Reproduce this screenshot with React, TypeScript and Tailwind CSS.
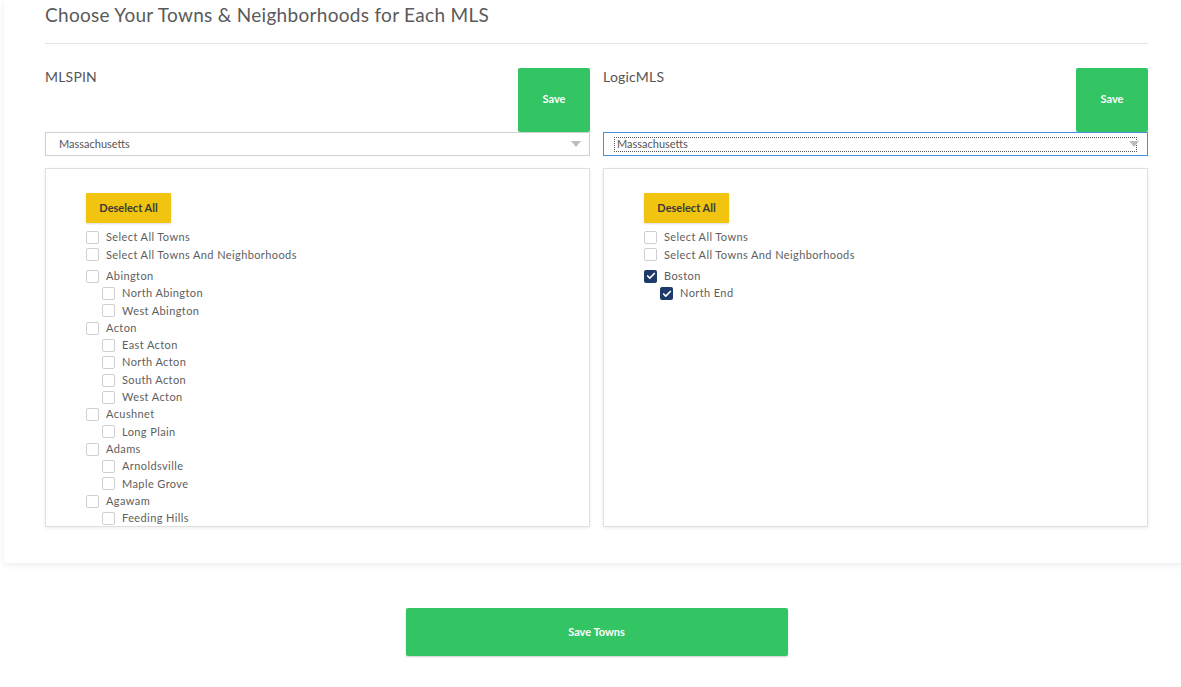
import { Check } from 'lucide-react'

type Town = { name: string; checked?: boolean; hoods: { name: string; checked?: boolean }[] }

const mlspinTowns: Town[] = [
  { name: 'Abington', hoods: [{ name: 'North Abington' }, { name: 'West Abington' }] },
  { name: 'Acton', hoods: [{ name: 'East Acton' }, { name: 'North Acton' }, { name: 'South Acton' }, { name: 'West Acton' }] },
  { name: 'Acushnet', hoods: [{ name: 'Long Plain' }] },
  { name: 'Adams', hoods: [{ name: 'Arnoldsville' }, { name: 'Maple Grove' }] },
  { name: 'Agawam', hoods: [{ name: 'Feeding Hills' }] },
]

const logicTowns: Town[] = [{ name: 'Boston', checked: true, hoods: [{ name: 'North End', checked: true }] }]

function Box({ checked }: { checked?: boolean }) {
  if (checked) {
    return (
      <span className="flex h-[13px] w-[13px] shrink-0 items-center justify-center rounded-[2px] bg-[#1d3a6b]">
        <Check size={10} strokeWidth={4} className="text-white" />
      </span>
    )
  }
  return <span className="h-[13px] w-[13px] shrink-0 rounded-[2px] border border-[#cfcfcf] bg-white" />
}

function Row({ label, checked, indent }: { label: string; checked?: boolean; indent?: boolean }) {
  return (
    <label className={`flex h-[17.3px] items-center gap-[7px] text-[11px] tracking-[0.4px] text-[#5e5e5e] ${indent ? 'pl-4' : ''}`}>
      <Box checked={checked} />
      <span>{label}</span>
    </label>
  )
}

function MlsColumn({ name, towns, focused }: { name: string; towns: Town[]; focused?: boolean }) {
  return (
    <div className="flex flex-col">
      <div className="flex h-[64px] items-start justify-between">
        <h3 className="-mt-[2px] text-[14px] tracking-[0.2px] text-[#555]">{name}</h3>
        <button className="h-[64px] w-[72px] rounded-[2px] bg-[#33c463] pb-[2px] text-[11px] font-bold text-white">Save</button>
      </div>
      <div
        className={`relative flex h-[24px] items-center border bg-white pt-[1px] ${
          focused ? 'border-[#4a8ee6]' : 'border-[#d0d0d0]'
        }`}
      >
        <span
          className={`text-[11px] text-[#555] ${
            focused ? 'mx-[10px] flex h-[15px] flex-1 items-center border border-dotted border-[#555] pl-[2px]' : 'pl-[13px]'
          }`}
        >
          Massachusetts
        </span>
        <span className="absolute right-[8px] top-[8px] h-0 w-0 border-x-[5px] border-t-[6px] border-x-transparent border-t-[#bdbdbd]" />
      </div>
      <div className="mt-[12px] h-[359px] overflow-hidden border border-[#e0e0e0] bg-white pl-[40px] pt-[24px] shadow-[0_1px_3px_rgba(0,0,0,0.08)]">
        <button className="h-[30px] w-[85px] rounded-[1px] bg-[#f1c40f] text-[11px] font-bold text-[#3a3a3a] shadow-[0_1px_2px_rgba(0,0,0,0.15)]">
          Deselect All
        </button>
        <div className="mt-[6px] flex flex-col">
          <Row label="Select All Towns" />
          <Row label="Select All Towns And Neighborhoods" />
          <div className="h-[4px]" />
          {towns.map(t => (
            <div key={t.name} className="flex flex-col">
              <Row label={t.name} checked={t.checked} />
              {t.hoods.map(h => (
                <Row key={h.name} label={h.name} checked={h.checked} indent />
              ))}
            </div>
          ))}
        </div>
      </div>
    </div>
  )
}

export default function App() {
  return (
    <div className="h-[687px] w-[1181px] overflow-hidden bg-white font-['Lato',sans-serif]">
      <div className="ml-[4px] w-[1185px] bg-white px-[41px] pb-[36px] shadow-[0_2px_6px_rgba(0,0,0,0.08)]">
        <h1 className="pt-[3px] text-[19px] leading-[24px] tracking-[0.3px] text-[#5a5a5a]">
          Choose Your Towns &amp; Neighborhoods for Each MLS
        </h1>
        <div className="mt-[16px] mb-[24px] border-t border-[#e6e6e6]" />
        <div className="grid grid-cols-2 gap-[13px]">
          <MlsColumn name="MLSPIN" towns={mlspinTowns} />
          <MlsColumn name="LogicMLS" towns={logicTowns} focused />
        </div>
      </div>
      <div className="mt-[45px] flex justify-center">
        <button className="ml-[12px] h-[48px] w-[382px] rounded-[2px] bg-[#33c463] text-[11px] font-bold text-white shadow-[0_1px_2px_rgba(0,0,0,0.2)]">
          Save Towns
        </button>
      </div>
    </div>
  )
}
